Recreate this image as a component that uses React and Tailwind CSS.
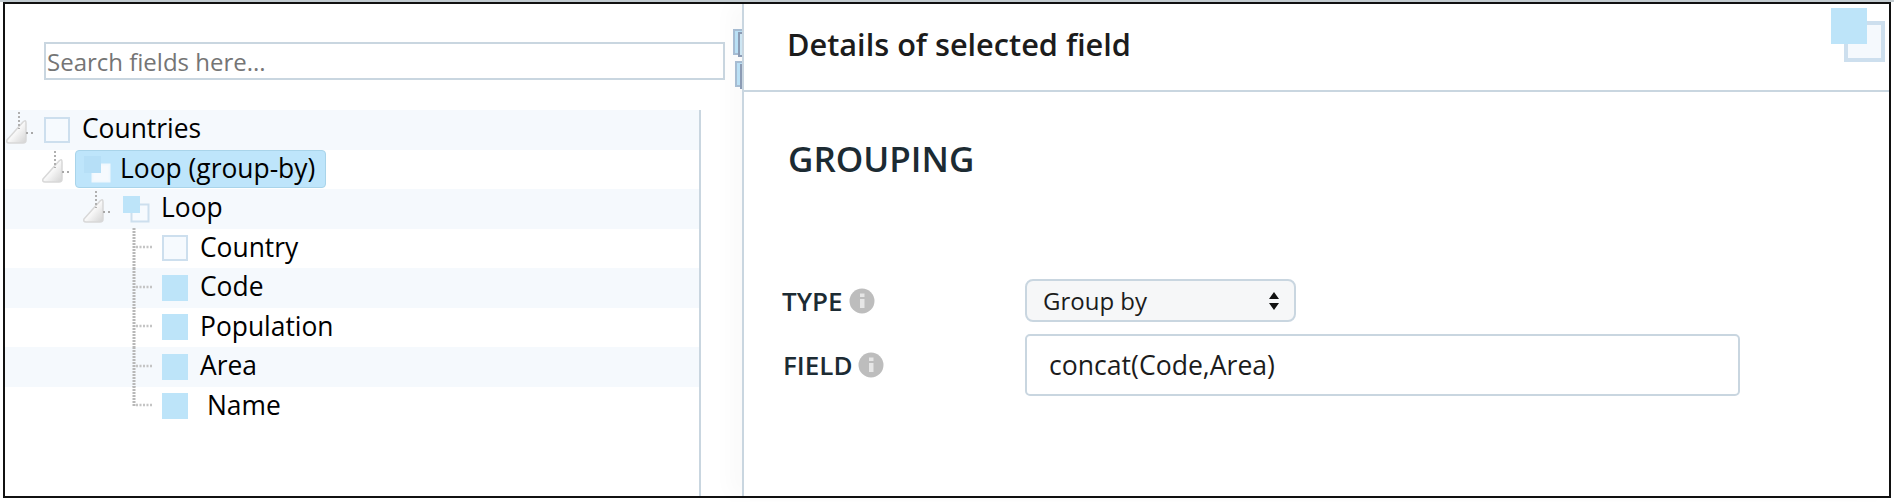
const FONT = "font-['Open_Sans','Noto_Sans',sans-serif]"

function Expander() {
  return (
    <svg width="32" height="38" viewBox="0 0 32 38" className="shrink-0">
      <defs>
        <linearGradient id="tri" x1="0" y1="0" x2="1" y2="1">
          <stop offset="0" stopColor="#ffffff" />
          <stop offset="0.5" stopColor="#f8f8f8" />
          <stop offset="1" stopColor="#d2d2d2" />
        </linearGradient>
      </defs>
      <path d="M1 29 L17 11 Q20 8 20 12 L20 29 Q20 32 17 32 L3 32 Q0 32 1 29 Z" fill="url(#tri)" stroke="#d8d8d8" strokeWidth="1.5" />
      <path d="M13 1 L13 18" stroke="#b0b0b0" strokeWidth="2" strokeDasharray="2 2" />
      <path d="M20 22 L30 22" stroke="#a8a8a8" strokeWidth="2" strokeDasharray="2 3" />
    </svg>
  )
}

function Connector({ last }) {
  return (
    <svg width="31" height="40" viewBox="0 0 31 40" className="shrink-0">
      <path d={last ? 'M3 0 L3 20' : 'M3 0 L3 40'} stroke="#b8b8b8" strokeWidth="3" strokeDasharray="2 1" />
      <path d="M5 19 L22 19" stroke="#c4c4c4" strokeWidth="2.5" strokeDasharray="2 1.5" />
    </svg>
  )
}

function LoopIcon({ faded }) {
  return (
    <svg width="28" height="28" viewBox="0 0 28 28" className="shrink-0">
      <rect x="9.5" y="9.5" width="17" height="17" fill="#f6fafe" stroke={faded ? '#f0f8fe' : '#cddfee'} strokeWidth="2" />
      <rect x="1" y="1" width="17" height="17" fill={faded ? '#b6dff7' : '#bde4f9'} />
    </svg>
  )
}

function NodeIcon({ type }) {
  if (type === 'empty') {
    return <div className="w-[26px] h-[26px] shrink-0 border-2 border-[#cddfee] bg-[#f6fafe]" />
  }
  if (type === 'full') {
    return <div className="w-[26px] h-[26px] shrink-0 bg-[#bde4f9]" />
  }
  return <LoopIcon faded={type === 'loop-selected'} />
}

function TreeRow({ striped, indent, children }) {
  return (
    <div className={`h-[39.5px] flex items-center ${indent} ${striped ? 'bg-[#f5f9fd]' : ''}`}>
      {children}
    </div>
  )
}

function Label({ children }) {
  return <span className="block mb-[3px] text-[26.4px] text-black leading-none whitespace-nowrap">{children}</span>
}

function InfoIcon() {
  return (
    <svg width="26" height="26" viewBox="0 0 26 26" className="shrink-0 blur-[0.6px]">
      <circle cx="13" cy="13" r="12.5" fill="#bdbdbd" />
      <rect x="11" y="11" width="4.5" height="9" fill="#e6e6e6" />
      <rect x="11" y="5.5" width="4.5" height="3.5" fill="#e6e6e6" />
    </svg>
  )
}

function StackIcon() {
  return (
    <svg width="24" height="28" viewBox="0 0 24 28" className="shrink-0">
      <rect x="1" y="1" width="14" height="24" fill="#bde4f9" stroke="#a9bfd6" strokeWidth="2" />
      <rect x="6" y="4" width="14" height="23" fill="#d3ebf8" stroke="#8f9fb8" strokeWidth="2" />
    </svg>
  )
}

const fields = [
  { name: 'Code', striped: true },
  { name: 'Population' },
  { name: 'Area', striped: true },
]

export default function App() {
  return (
    <div className={`w-[1894px] h-[502px] bg-white border-t-2 border-[#c2cbd0] overflow-hidden ${FONT}`}>
      <div className="ml-[3px] w-[1888px] h-[496px] border-2 border-[#111] flex">

        {/* Left: field tree */}
        <div className="w-[737px] shrink-0 flex flex-col">
          <div className="h-[106px] shrink-0 flex pl-[39px] pt-[25px]">
            <input
              readOnly
              placeholder="Search fields here..."
              className="w-[681px] shrink-0 h-[38px] mt-[13px] border-2 border-[#c9d6e0] pl-[1px] text-[24px] bg-white placeholder:text-[#757575] outline-none"
            />
            <div className="ml-[8px] flex flex-col gap-[4px]">
              <StackIcon />
              <div className="ml-[2px]"><StackIcon /></div>
            </div>
          </div>

          <div className="flex-1 w-[696px] border-r-2 border-[#c9d6e0]">
            <TreeRow striped indent="pl-[1px]">
              <Expander />
              <div className="ml-[6px] mr-[12px]"><NodeIcon type="empty" /></div>
              <Label>Countries</Label>
            </TreeRow>
            <TreeRow indent="pl-[37px]">
              <Expander />
              <div className="ml-[1px] h-[38px] w-[251px] flex items-center bg-[#bee5fb] border border-[#a9d4ea] rounded-[4px] pl-[7px]">
                <NodeIcon type="loop-selected" />
                <span className="ml-[9px]"><Label>Loop (group-by)</Label></span>
              </div>
            </TreeRow>
            <TreeRow striped indent="pl-[78px]">
              <Expander />
              <div className="ml-[7px] mr-[11px]"><NodeIcon type="loop" /></div>
              <Label>Loop</Label>
            </TreeRow>
            <TreeRow indent="pl-[126px]">
              <Connector />
              <NodeIcon type="empty" />
              <span className="ml-[12px]"><Label>Country</Label></span>
            </TreeRow>
            {fields.map((f) => (
              <TreeRow key={f.name} striped={f.striped} indent="pl-[126px]">
                <Connector />
                <NodeIcon type="full" />
                <span className="ml-[12px]"><Label>{f.name}</Label></span>
              </TreeRow>
            ))}
            <TreeRow indent="pl-[126px]">
              <Connector last />
              <NodeIcon type="full" />
              <span className="ml-[19px]"><Label>Name</Label></span>
            </TreeRow>
          </div>
        </div>

        {/* Right: details */}
        <div className="relative z-10 flex-1 min-w-0 bg-white border-l-2 border-[#c9d6e0] shadow-[-12px_0_20px_rgba(0,0,0,0.025)]">
          <div className="h-[88px] border-b-2 border-[#c9d6e0] flex justify-between pl-[43px] pr-[4px] pt-[4px]">
            <h2 className="text-[30.7px] font-semibold text-[#1c1c1c] leading-none mt-[21px]">Details of selected field</h2>
            <svg width="54" height="54" viewBox="0 0 54 54" className="shrink-0">
              <rect x="15" y="15" width="37" height="37" fill="#f5f9fd" stroke="#cddfee" strokeWidth="4" />
              <rect x="0" y="0" width="36" height="36" fill="#bde4f9" />
            </svg>
          </div>

          <div className="pl-[44px]">
            <h3 className="text-[35px] font-semibold text-[#1c2b33] leading-none mt-[49px]">GROUPING</h3>
          </div>

          <div className="pl-[37px] mt-[103px] flex flex-col gap-[12px]">
            <div className="flex items-center h-[43px]">
              <div className="w-[244px] pl-[1px] flex items-center gap-[6px]">
                <span className="text-[26px] font-semibold text-[#1c2b33] leading-none">TYPE</span>
                <InfoIcon />
              </div>
              <div className="w-[271px] h-[43px] flex items-center justify-between rounded-[8px] bg-[#f6f7f8] border-2 border-[#c9d6e0] pl-[16px] pr-[14px]">
                <span className="text-[24px] text-[#1c1c1c]">Group by</span>
                <svg width="12" height="20" viewBox="0 0 12 20">
                  <path d="M6 1 L11 8 L1 8 Z M6 19 L11 12 L1 12 Z" fill="#111" />
                </svg>
              </div>
            </div>
            <div className="flex items-center h-[62px]">
              <div className="w-[244px] pl-[2px] flex items-center gap-[6px]">
                <span className="text-[26px] font-semibold text-[#1c2b33] leading-none">FIELD</span>
                <InfoIcon />
              </div>
              <input
                readOnly
                defaultValue="concat(Code,Area)"
                className="w-[715px] h-[62px] rounded-[5px] border-2 border-[#c9d6e0] pl-[22px] text-[26.6px] text-[#1c1c1c] bg-white outline-none"
              />
            </div>
          </div>
        </div>

      </div>
    </div>
  )
}
